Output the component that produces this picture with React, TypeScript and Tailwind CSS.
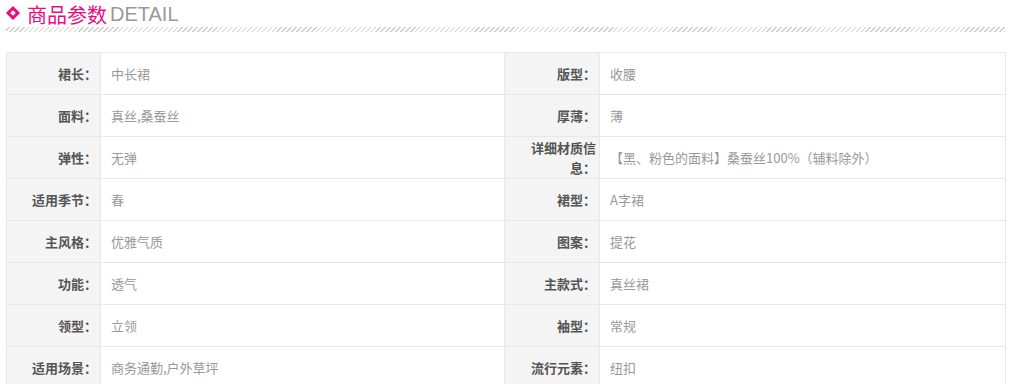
const rows: [string, string, string, string][] = [
  ["裙长", "中长裙", "版型", "收腰"],
  ["面料", "真丝,桑蚕丝", "厚薄", "薄"],
  ["弹性", "无弹", "详细材质信息", "【黑、粉色的面料】桑蚕丝100%（辅料除外）"],
  ["适用季节", "春", "裙型", "A字裙"],
  ["主风格", "优雅气质", "图案", "提花"],
  ["功能", "透气", "主款式", "真丝裙"],
  ["领型", "立领", "袖型", "常规"],
  ["适用场景", "商务通勤,户外草坪", "流行元素", "纽扣"],
];

export default function App() {
  return (
    <div className="bg-white w-[1011px] h-[384px] overflow-hidden font-['Microsoft_YaHei','Noto_Sans_CJK_SC',sans-serif]">
      {/* Title */}
      <div className="px-[6px]">
        <div className="flex items-start h-[26px]">
          <span className="w-[10px] h-[10px] border-[3px] border-[#ec0b7f] rotate-45 ml-[2px] mr-[9px] mt-[8px]"></span>
          <span className="text-[20px] leading-[29px] text-[#ec0b7f]">商品参数</span>
          <span className="text-[20px] leading-[29px] text-[#999] ml-[3px] font-['Liberation_Sans','Noto_Sans_CJK_SC',sans-serif]">DETAIL</span>
        </div>
        <div className="h-[5px] mt-[1px] bg-[repeating-linear-gradient(-45deg,#cfcfcf_0px,#cfcfcf_1px,transparent_1px,transparent_3.5px)]"></div>
      </div>

      {/* Params table */}
      <table className="ml-[6px] mt-[20px] w-[1000px] table-fixed border-collapse text-[13px]">
        <colgroup>
          <col className="w-[94px]" />
          <col className="w-[404px]" />
          <col className="w-[95px]" />
          <col />
        </colgroup>
        <tbody>
          {rows.map((r, i) => (
            <tr key={i} className="h-[42px]">
              <td className="bg-[#f4f4f4] border border-[#e8e8e8] text-right pr-[3px] pl-[4px] font-bold text-[#555] leading-[20px]">
                {r[0]}：
              </td>
              <td className="border border-[#e8e8e8] pl-[10px] text-[#999]">{r[1]}</td>
              <td className="bg-[#f4f4f4] border border-[#e8e8e8] text-right pr-[3px] pl-[4px] font-bold text-[#555] leading-[20px]">
                {r[2]}：
              </td>
              <td className="border border-[#e8e8e8] pl-[10px] text-[#999]">{r[3]}</td>
            </tr>
          ))}
        </tbody>
      </table>
    </div>
  );
}
